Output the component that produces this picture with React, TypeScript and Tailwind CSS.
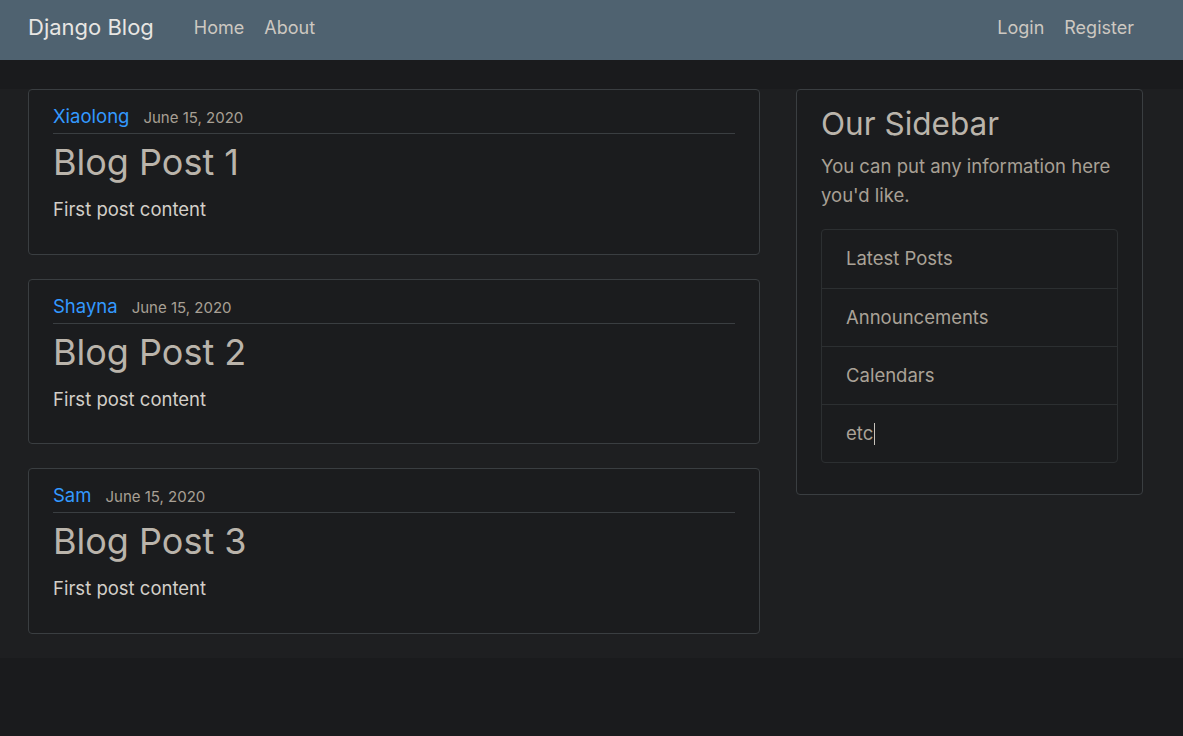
import React from 'react';

interface Post {
  author: string;
  date: string;
  title: string;
  content: string;
}

const posts: Post[] = [
  { author: 'Xiaolong', date: 'June 15, 2020', title: 'Blog Post 1', content: 'First post content' },
  { author: 'Shayna', date: 'June 15, 2020', title: 'Blog Post 2', content: 'First post content' },
  { author: 'Sam', date: 'June 15, 2020', title: 'Blog Post 3', content: 'First post content' },
];

const sidebarLinks = ['Latest Posts', 'Announcements', 'Calendars', 'etc'];

const PostCard: React.FC<{ post: Post }> = ({ post }) => (
  <article className="mb-[24px] rounded-[4px] border border-[#3a3e41] bg-[#1b1c1e] px-[24px] pt-[12px] pb-[12.5px]">
    {/* Author + date */}
    <div className="mb-[6px] flex items-baseline gap-[14px] border-b border-[#3a3e41] pb-[1px] leading-[29px]">
      <a href="#" className="text-[18.5px] text-[#3399ff]">
        {post.author}
      </a>
      <small className="text-[15px] text-[#a8a095]">{post.date}</small>
    </div>
    <h2 className="mb-[10px] text-[36px] leading-[44px] font-normal text-[#bab4ab]">{post.title}</h2>
    <p className="mb-[17px] text-[18.5px] leading-[30px] text-[#d3cfc9]">{post.content}</p>
  </article>
);

const Sidebar: React.FC = () => (
  <aside className="rounded-[4px] border border-[#3a3e41] bg-[#1b1c1e] px-[24px] pt-[15px] pb-[31px]">
    <h3 className="mb-[10px] text-[31.5px] leading-[37px] font-normal text-[#bab4ab]">Our Sidebar</h3>
    <p className="mb-[19px] text-[18.5px] leading-[29px] text-[#a8a095]">
      You can put any information here you'd like.
    </p>
    <ul className="overflow-hidden rounded-[4px] border border-[#2c2f31]">
      {sidebarLinks.map((link, i) => (
        <li
          key={link}
          className={`flex h-[58px] items-center px-[24px] text-[18.5px] text-[#aaa297] ${
            i > 0 ? 'border-t border-[#2c2f31]' : ''
          }`}
        >
          {link}
          {link === 'etc' && <span className="ml-px inline-block h-[22px] w-px bg-[#c8c3bc]" />}
        </li>
      ))}
    </ul>
  </aside>
);

export default function App() {
  return (
    <div className="min-h-[736px] bg-[#1a1b1d] font-['Inter','Noto_Sans',sans-serif] antialiased">
      {/* Navbar */}
      <header className="flex h-[60px] items-center bg-[#4f6270] pb-[6px] pl-[28px] pr-[39px]">
        <a href="#" className="mr-[30px] text-[22px] text-[#e8e6e3]">
          Django Blog
        </a>
        <nav className="flex text-[18px] text-[#cdc8c1]">
          <a href="#" className="px-[10px]">Home</a>
          <a href="#" className="px-[10px]">About</a>
        </nav>
        <nav className="ml-auto flex text-[18px] text-[#cdc8c1]">
          <a href="#" className="px-[10px]">Login</a>
          <a href="#" className="px-[10px]">Register</a>
        </nav>
      </header>

      {/* Main */}
      <main className="mt-[29px] bg-[#1e1f21] pl-[28px]">
        <div className="flex items-start gap-[36px]">
          <div className="w-[732px]">
            {posts.map((post) => (
              <PostCard key={post.title} post={post} />
            ))}
          </div>
          <div className="w-[347px]">
            <Sidebar />
          </div>
        </div>
      </main>
    </div>
  );
}
